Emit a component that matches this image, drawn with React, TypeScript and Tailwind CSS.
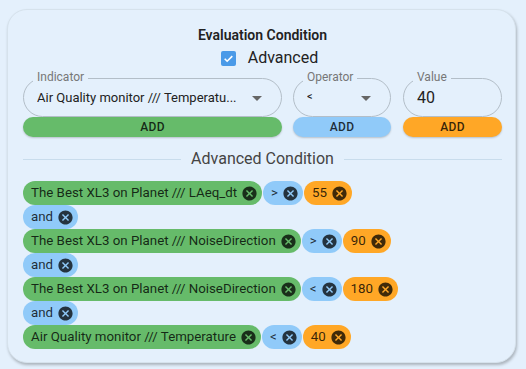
import React from "react";

type Tone = "green" | "blue" | "orange";

const toneClass: Record<Tone, string> = {
  green: "bg-[#66bb6a]",
  blue: "bg-[#90caf9]",
  orange: "bg-[#ffa726]",
};

function CancelIcon() {
  return (
    <svg viewBox="0 0 24 24" className="w-[17px] h-[17px] fill-black/75 shrink-0">
      <path d="M12 2C6.47 2 2 6.47 2 12s4.47 10 10 10 10-4.47 10-10S17.53 2 12 2m5 13.59L15.59 17 12 13.41 8.41 17 7 15.59 10.59 12 7 8.41 8.41 7 12 10.59 15.59 7 17 8.41 13.41 12z" />
    </svg>
  );
}

function Chip({ label, tone }: { label: string; tone: Tone }) {
  return (
    <div
      className={`h-[24px] inline-flex items-center rounded-full pl-[8px] pr-[4px] gap-[4px] text-[13.3px] text-black/80 ${toneClass[tone]}`}
    >
      <span className="whitespace-nowrap">{label}</span>
      <CancelIcon />
    </div>
  );
}

function Field({
  label,
  value,
  width,
  select,
  valueClass,
}: {
  label: string;
  value: string;
  width: string;
  select?: boolean;
  valueClass: string;
}) {
  return (
    <div className={`relative h-[39px] ${width}`}>
      <div className="h-full rounded-full border border-[#b3bec8] flex items-center pl-[13px] pr-[12px]">
        <span className={`flex-1 whitespace-nowrap overflow-hidden text-[#222] ${valueClass}`}>{value}</span>
        {select && (
          <svg viewBox="0 0 24 24" className="w-[24px] h-[24px] fill-[#666] shrink-0">
            <path d="M7 10l5 5 5-5z" />
          </svg>
        )}
      </div>
      <span className="absolute left-[10px] -top-[8px] px-[4px] bg-[#e4f0fc] text-[12px] leading-[14px] text-[#777]">
        {label}
      </span>
    </div>
  );
}

function AddButton({ tone, width }: { tone: Tone; width: string }) {
  return (
    <div
      className={`h-[20px] ${width} rounded-full ${toneClass[tone]} flex items-center justify-center text-[12px] font-medium tracking-wide text-black/80 shadow-[0_1px_2px_rgba(0,0,0,0.2)]`}
    >
      ADD
    </div>
  );
}

const rows: { items: { label: string; tone: Tone }[] }[] = [
  { items: [{ label: "The Best XL3 on Planet /// LAeq_dt", tone: "green" }, { label: ">", tone: "blue" }, { label: "55", tone: "orange" }] },
  { items: [{ label: "and", tone: "blue" }] },
  { items: [{ label: "The Best XL3 on Planet /// NoiseDirection", tone: "green" }, { label: ">", tone: "blue" }, { label: "90", tone: "orange" }] },
  { items: [{ label: "and", tone: "blue" }] },
  { items: [{ label: "The Best XL3 on Planet /// NoiseDirection", tone: "green" }, { label: "<", tone: "blue" }, { label: "180", tone: "orange" }] },
  { items: [{ label: "and", tone: "blue" }] },
  { items: [{ label: "Air Quality monitor /// Temperature", tone: "green" }, { label: "<", tone: "blue" }, { label: "40", tone: "orange" }] },
];

export default function App() {
  return (
    <div className="w-[526px] h-[369px] bg-[#e4f0fc] pt-[9px] pl-[7px] font-['Roboto',sans-serif]">
      <div className="w-[509px] h-[354px] rounded-[20px] border border-[#d6e2ec] bg-[#e4f0fc] shadow-[1px_2px_3px_rgba(0,0,0,0.25)] pt-[15px] pl-[15px] pr-[13px]">
        <div className="text-center text-[14px] font-semibold text-[#222] leading-[20px]">Evaluation Condition</div>
        <div className="flex items-center justify-center gap-[12px] h-[26px] pl-[14px]">
          <div className="w-[15px] h-[15px] rounded-[2px] bg-[#4a9ae8] flex items-center justify-center">
            <svg viewBox="0 0 24 24" className="w-[13px] h-[13px] fill-none stroke-white stroke-[3]">
              <path d="M5 12.5l4.5 4.5L19 7.5" />
            </svg>
          </div>
          <span className="text-[16px] text-[#222]">Advanced</span>
        </div>
        <div className="flex gap-[11px] mt-[7px]">
          <div className="flex flex-col">
            <Field label="Indicator" value="Air Quality monitor /// Temperatu..." width="w-[259px]" select valueClass="text-[13px]" />
            <AddButton tone="green" width="w-[259px]" />
          </div>
          <div className="flex flex-col">
            <Field label="Operator" value="<" width="w-[98px]" select valueClass="text-[11px]" />
            <AddButton tone="blue" width="w-[98px]" />
          </div>
          <div className="flex flex-col ml-[1px]">
            <Field label="Value" value="40" width="w-[99px]" valueClass="text-[16px]" />
            <AddButton tone="orange" width="w-[99px]" />
          </div>
        </div>
        <div className="flex items-center gap-[10px] mt-[12px] h-[20px]">
          <div className="flex-1 h-px bg-[#c8dcec]" />
          <span className="text-[16px] text-[#444]">Advanced Condition</span>
          <div className="flex-1 h-px bg-[#c8dcec]" />
        </div>
        <div className="flex flex-col mt-[12px]">
          {rows.map((row, i) => (
            <div key={i} className="flex gap-[1px]">
              {row.items.map((c, j) => (
                <Chip key={j} label={c.label} tone={c.tone} />
              ))}
            </div>
          ))}
        </div>
      </div>
    </div>
  );
}
